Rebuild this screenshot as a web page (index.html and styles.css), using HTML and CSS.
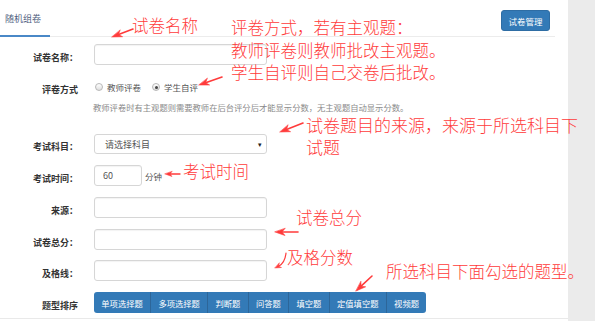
FILE: index.html
```html
<!DOCTYPE html>
<html lang="zh-CN">
<head>
  <meta charset="UTF-8">
  <title>随机组卷</title>
  <link rel="stylesheet" href="styles.css">
</head>
<body>
  <div class="page">
    <div class="main">
      <div class="topbar">
        <div class="tab active">随机组卷</div>
        <button class="btn-manage">试卷管理</button>
      </div>

      <div class="form">
        <div class="row row-name">
          <span class="lbl">试卷名称：</span>
          <input class="ctl" type="text">
        </div>

        <div class="row row-radio">
          <span class="lbl">评卷方式</span>
          <label class="radio"><span class="dot"></span>教师评卷</label>
          <label class="radio checked"><span class="dot"></span>学生自评</label>
        </div>
        <p class="help">教师评卷时有主观题则需要教师在后台评分后才能显示分数，无主观题自动显示分数。</p>

        <div class="row row-subject">
          <span class="lbl">考试科目：</span>
          <div class="select">请选择科目<span class="caret">▾</span></div>
        </div>

        <div class="row">
          <span class="lbl">考试时间：</span>
          <input class="ctl ctl-short" type="text" value="60">
          <span class="unit">分钟</span>
        </div>

        <div class="row">
          <span class="lbl">来源：</span>
          <input class="ctl" type="text">
        </div>

        <div class="row">
          <span class="lbl">试卷总分：</span>
          <input class="ctl" type="text">
        </div>

        <div class="row row-pass">
          <span class="lbl">及格线：</span>
          <input class="ctl" type="text">
        </div>

        <div class="row">
          <span class="lbl">题型排序</span>
          <div class="btn-group">
            <button>单项选择题</button>
            <button>多项选择题</button>
            <button>判断题</button>
            <button>问答题</button>
            <button>填空题</button>
            <button>定值填空题</button>
            <button>视频题</button>
          </div>
        </div>
      </div>
    </div>
    <div class="side"></div>
  </div>

  <!-- red notes drawn over the form -->
  <div class="notes">
    <div class="note note-name">试卷名称</div>
    <div class="note note-mode">评卷方式，若有主观题：<br>教师评卷则教师批改主观题。<br>学生自评则自己交卷后批改。</div>
    <div class="note note-source">试卷题目的来源，来源于所选科目下</div>
    <div class="note note-source2">试题</div>
    <div class="note note-time">考试时间</div>
    <div class="note note-total">试卷总分</div>
    <div class="note note-pass">及格分数</div>
    <div class="note note-types">所选科目下面勾选的题型。</div>

    <svg class="arrows" width="598" height="321" viewBox="0 0 598 321">
      <g fill="#ff3b3b" stroke="#ff3b3b" stroke-linecap="round">
        <line x1="133" y1="29" x2="118.5" y2="34.5" stroke-width="1.6"/>
        <polygon points="112,37 122.6,36.7 118.5,34.5 120.1,30.2" stroke-width="0.6"/>

        <line x1="222" y1="77" x2="205.6" y2="82.7" stroke-width="1.6"/>
        <polygon points="199,85 209.6,85 205.6,82.7 207.3,78.4" stroke-width="0.6"/>

        <line x1="303" y1="123" x2="286.5" y2="129.5" stroke-width="1.6"/>
        <polygon points="280,132 290.6,131.7 286.5,129.5 288,125.1" stroke-width="0.6"/>

        <line x1="180" y1="174" x2="170" y2="174" stroke-width="1.3"/>
        <polygon points="165,174 172,176.5 170,174 172,171.5" stroke-width="0.5"/>

        <line x1="298" y1="232" x2="282" y2="232" stroke-width="1.6"/>
        <polygon points="275,232 285,235.5 282,232 285,228.5" stroke-width="0.6"/>

        <path d="M286 253 Q285 263 278.6 266.2" fill="none" stroke-width="1.2"/>
        <polygon points="275,268 281.5,267.5 278.6,266.2 279.3,263.1" stroke-width="0.5"/>

        <line x1="372" y1="276" x2="361.1" y2="286.2" stroke-width="1.6"/>
        <polygon points="356,291 365.7,286.8 361.1,286.2 360.9,281.6" stroke-width="0.6"/>
      </g>
    </svg>
  </div>
</body>
</html>
```

FILE: styles.css
```css
body {
  margin: 0;
  background: #fff;
  font-family: "Noto Sans CJK SC", "Liberation Sans", sans-serif;
  color: #333;
}
.page {
  display: flex;
  width: 598px;
  height: 321px;
  position: relative;
}
.main {
  width: 568px;
  height: 318px;
  border-bottom: 1px solid #e9e9e9;
}
.side {
  width: 27px;
  background: #ebebeb;
}

/* header */
.topbar {
  width: 555px;
  height: 36px;
  display: flex;
  justify-content: space-between;
  align-items: flex-start;
  border-bottom: 1px solid #ececec;
}
.tab {
  box-sizing: border-box;
  width: 50px;
  height: 37px;
  padding: 13px 0 0 5px;
  font-size: 9px;
  line-height: 12px;
  color: #4f6180;
}
.tab.active {
  border-bottom: 2px solid #4a88c7;
}
.btn-manage {
  margin: 10px 5px 0 0;
  width: 49px;
  height: 21px;
  padding: 0;
  background: #337ab7;
  border: 1px solid #2e6da4;
  border-radius: 3px;
  color: #fff;
  font-family: inherit;
  font-size: 8.5px;
}

/* form */
.form {
  padding-top: 7px;
  display: flex;
  flex-direction: column;
  gap: 11px;
}
.row {
  display: flex;
  align-items: center;
  height: 21px;
}
.lbl {
  width: 78px;
  margin-right: 16px;
  padding-top: 6px;
  text-align: right;
  font-size: 9px;
  font-weight: bold;
  color: #333;
  line-height: 12px;
}
.ctl {
  box-sizing: border-box;
  width: 173px;
  height: 21px;
  margin: 0;
  border: 1px solid #d6d6d6;
  border-radius: 3px;
  box-shadow: inset 0 1px 1px rgba(0, 0, 0, 0.05);
  font-family: inherit;
  font-size: 9px;
  color: #555;
  padding: 0 0 0 8px;
}
.ctl-short {
  width: 48px;
}
.unit {
  margin-left: 3px;
  font-size: 8.5px;
  color: #555;
}

.row-radio {
  height: 20px;
  margin-top: 1px;
}
.radio {
  display: flex;
  align-items: center;
  font-size: 8.5px;
  color: #555;
  margin-right: 10px;
}
.radio .dot {
  box-sizing: border-box;
  width: 8px;
  height: 8px;
  margin: 0 4px 0 1px;
  border: 1px solid #b8b8b8;
  border-radius: 50%;
  background: linear-gradient(#fff, #dedede);
  display: flex;
  align-items: center;
  justify-content: center;
}
.radio.checked .dot::after {
  content: "";
  width: 3px;
  height: 3px;
  border-radius: 50%;
  background: #444;
}
.help {
  margin: -7px 0 0 93px;
  font-size: 8.3px;
  line-height: 12px;
  color: #8a8a8a;
}
.row-subject {
  height: 20px;
  margin-top: 10px;
}
.select {
  box-sizing: border-box;
  width: 173px;
  height: 20px;
  border: 1px solid #d6d6d6;
  border-radius: 3px;
  padding: 0 4px 0 10px;
  display: flex;
  align-items: center;
  justify-content: space-between;
  font-size: 9px;
  color: #555;
}
.caret {
  font-size: 7px;
  color: #222;
}
.row-pass {
  margin-top: -1px;
}

.btn-group {
  display: flex;
  height: 21px;
  border-radius: 3px;
  overflow: hidden;
}
.btn-group button {
  margin: 0;
  padding: 0 7.3px;
  height: 21px;
  background: #337ab7;
  border: none;
  border-right: 1px solid #2d6699;
  color: #fff;
  font-family: inherit;
  font-size: 8.3px;
}
.btn-group button:last-child {
  border-right: none;
}

/* red notes over the page */
.notes {
  position: absolute;
  left: 0;
  top: 0;
  width: 598px;
  height: 321px;
  pointer-events: none;
}
.arrows {
  position: absolute;
  left: 0;
  top: 0;
}
.note {
  position: absolute;
  font-size: 16.5px;
  line-height: 22px;
  font-weight: 300;
  color: #ff3b3b;
  white-space: nowrap;
}
.note-name {
  left: 132px;
  top: 14px;
}
.note-mode {
  left: 231px;
  top: 16px;
  line-height: 22.5px;
}
.note-source,
.note-source2 {
  left: 306px;
  font-size: 17px;
  line-height: 20px;
}
.note-source {
  top: 115px;
}
.note-source2 {
  top: 137px;
}
.note-time {
  left: 183px;
  top: 160px;
}
.note-total {
  left: 296px;
  top: 206px;
}
.note-pass {
  left: 287px;
  top: 246px;
}
.note-types {
  left: 386px;
  top: 260px;
}
```
